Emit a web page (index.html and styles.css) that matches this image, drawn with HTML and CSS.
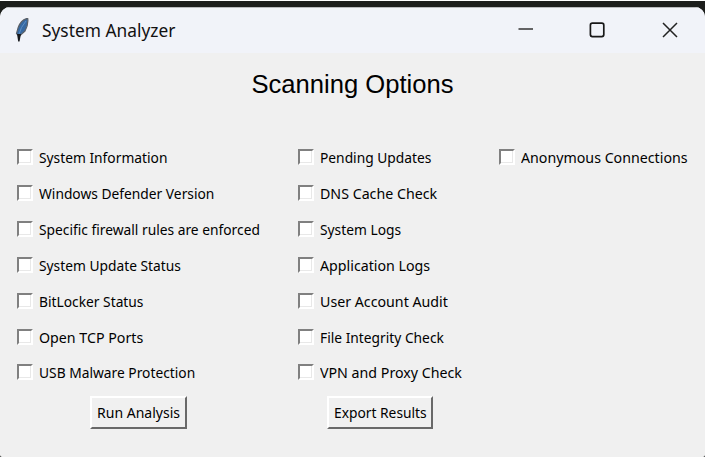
FILE: index.html
```html
<!DOCTYPE html>
<html lang="en">
<head>
<meta charset="utf-8">
<title>System Analyzer</title>
<link rel="stylesheet" href="styles.css">
</head>
<body>
<div class="desktop">
<main class="window">
  <header class="titlebar">
    <svg class="feather" width="16" height="26" viewBox="0 0 16 26">
      <path d="M13.700 .3C9.700 1 6 4.300 4.200 9.500L2.500 15.500l2.700 2.600L11 13C13 9.500 14.300 4.500 13.700 .3Z" fill="#3769a2" stroke="#5b6068" stroke-width="1.200"/>
      <path d="M12 3L7.500 9.500 4.500 17.500" fill="none" stroke="#5d8fc6" stroke-width="1"/>
      <path d="M3 16h4l-1.500 7.500H4.200z" fill="#15171b"/>
    </svg>
    <span class="caption"><span>System Analyzer</span></span>
    <div class="controls">
      <svg width="16" height="18" viewBox="0 0 16 18"><path d="M.5 7h14.500" stroke="#333" stroke-width="1.600"/></svg>
      <svg width="16" height="18" viewBox="0 0 16 18"><rect x="1.400" y="1.200" width="13.400" height="13.400" rx="2" fill="none" stroke="#181818" stroke-width="1.700"/></svg>
      <svg width="16" height="18" viewBox="0 0 16 18"><path d="M1 1l14 14M15 1L1 15" stroke="#222" stroke-width="1.500"/></svg>
    </div>
  </header>
  <h1>Scanning Options</h1>
  <section class="options">
    <div class="column">
      <label><i></i><span>System Information</span></label>
      <label><i></i><span>Windows Defender Version</span></label>
      <label><i></i><span>Specific firewall rules are enforced</span></label>
      <label><i></i><span>System Update Status</span></label>
      <label><i></i><span>BitLocker Status</span></label>
      <label class="wide"><i></i><span>Open TCP Ports</span></label>
      <label><i></i><span>USB Malware Protection</span></label>
      <button class="run"><span>Run Analysis</span></button>
    </div>
    <div class="column">
      <label><i></i><span>Pending Updates</span></label>
      <label class="wide"><i></i><span>DNS Cache Check</span></label>
      <label><i></i><span>System Logs</span></label>
      <label class="wide"><i></i><span>Application Logs</span></label>
      <label class="wide"><i></i><span>User Account Audit</span></label>
      <label><i></i><span>File Integrity Check</span></label>
      <label class="wide"><i></i><span>VPN and Proxy Check</span></label>
      <button class="export"><span>Export Results</span></button>
    </div>
    <div class="column">
      <label class="wide"><i></i><span>Anonymous Connections</span></label>
    </div>
  </section>
</main>
</div>
</body>
</html>
```
FILE: styles.css
```css
* { box-sizing: border-box; }
body { margin: 0; background: #fff; color: #000; font-family: "Noto Sans", sans-serif; }
.desktop { height: 456px; margin-top: 1px; padding-top: 6px; background: #1c1e1c; }
.window { height: 450px; background: #f0f0f0; border-radius: 10px 10px 2px 2px; overflow: hidden; }
.titlebar { height: 46px; display: flex; align-items: center; padding: 0 27px 0 14px; background: #f1f3f9; border-top: 1px solid #b9babd; }
.feather { margin-right: 12px; }
.caption { font-size: 18.5px; white-space: nowrap; line-height: 26px; padding-bottom: 2px; color: #111; }
.caption span { display: inline-block; transform: scaleX(.937); transform-origin: left; }
.controls { display: flex; gap: 57px; margin-left: auto; }
.controls svg { display: block; }
.controls svg:first-child { transform: translateX(2px); }
h1 { margin: 16px 0 0; height: 30px; font: 400 25.6px/30px "Liberation Sans", sans-serif; text-align: center; }
.options { display: grid; grid-template-columns: 281px 201px 1fr; padding: 40.3px 0 0 17px; }
label { display: flex; align-items: center; height: 35.86px; font-size: 15px; line-height: 20px; white-space: nowrap; }
label i { width: 16px; height: 16px; margin-right: 6px; background: #fff; border: 2px solid; border-color: #808080 #fff #fff #808080; box-shadow: inset -1px -1px #e8e8e8; }
label span, button span { display: inline-block; transform: scaleX(.919); transform-origin: left; }
label.wide span { transform: scaleX(.947); }
button { display: block; height: 33px; padding: 0 0 1px 4.5px; margin-top: 5.7px; background: #f0f0f0; border: 2px solid; border-color: #fff #696969 #696969 #fff; border-radius: 0; font: 15px "Noto Sans", sans-serif; color: #000; text-align: left; white-space: nowrap; }
.run { width: 97px; margin-left: 73px; }
.run span { transform: scaleX(.935); }
.export { width: 106px; margin-left: 29px; }
```
